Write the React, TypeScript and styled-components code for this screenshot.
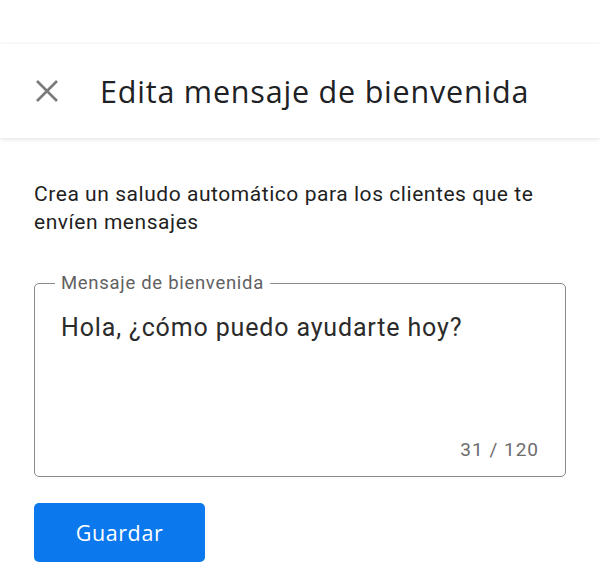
import React, { useState } from "react";
import styled, { createGlobalStyle } from "styled-components";

const Global = createGlobalStyle`
  html, body {
    margin: 0;
    padding: 0;
    background: #fff;
    font-family: Roboto, "Liberation Sans", sans-serif;
  }
`;

const Page = styled.div`
  width: 600px;
  height: 574px;
  background: #fff;
  padding-top: 44px;
  box-sizing: border-box;
  overflow: hidden;
`;

const Header = styled.header`
  height: 94px;
  display: flex;
  align-items: center;
  padding-left: 33px;
  background: #fff;
  box-shadow: 0 -1px 3px rgba(0, 0, 0, 0.04), 0 2px 4px rgba(0, 0, 0, 0.09);
`;

const CloseButton = styled.button`
  width: 28px;
  height: 28px;
  padding: 0;
  border: none;
  background: none;
  display: flex;
  align-items: center;
  justify-content: center;
  color: #7a7a7a;
  margin-right: 39px;
`;

const Title = styled.h1`
  margin: 0;
  font-family: "Open Sans", Roboto, sans-serif;
  font-weight: 400;
  font-size: 30.5px;
  letter-spacing: 0.8px;
  color: #202124;
`;

const Body = styled.main`
  padding: 42px 34px 0 34px;
`;

const Intro = styled.p`
  margin: 0;
  font-size: 21px;
  line-height: 28px;
  letter-spacing: 0.55px;
  color: #1f1f1f;
  max-width: 520px;
`;

const Field = styled.fieldset`
  margin: 37px 0 0 0;
  padding: 0 26px 15px 26px;
  height: 204px;
  box-sizing: border-box;
  border: 1.5px solid #8a8a8a;
  border-radius: 5px;
  display: flex;
  flex-direction: column;
`;

const Legend = styled.legend`
  padding: 0 6px;
  margin-left: -6px;
  font-size: 18.5px;
  letter-spacing: 0.7px;
  color: #616161;
  line-height: 20px;
`;

const Message = styled.textarea`
  flex: 1;
  border: none;
  outline: none;
  resize: none;
  padding: 0;
  margin-top: 20px;
  font-family: Roboto, sans-serif;
  font-size: 25px;
  letter-spacing: 0.85px;
  color: #2b2b2b;
  background: transparent;
`;

const Counter = styled.div`
  align-self: flex-end;
  font-size: 19px;
  letter-spacing: 1px;
  color: #6d6d6d;
`;

const SaveButton = styled.button`
  margin-top: 26px;
  width: 171px;
  height: 59px;
  border: none;
  border-radius: 5px;
  background: #0b78ee;
  color: #fff;
  font-family: "Open Sans", Roboto, sans-serif;
  font-size: 21.5px;
  font-weight: 500;
  letter-spacing: 0.6px;
`;

const CloseIcon = () => (
  <svg width="24" height="24" viewBox="0 0 24 24">
    <path d="M2 2 L22 22 M22 2 L2 22" stroke="currentColor" strokeWidth="2.6" fill="none" />
  </svg>
);

const App = () => {
  const [text, setText] = useState("Hola, ¿cómo puedo ayudarte hoy?");

  return (
    <Page>
      <Global />
      <Header>
        <CloseButton aria-label="Cerrar">
          <CloseIcon />
        </CloseButton>
        <Title>Edita mensaje de bienvenida</Title>
      </Header>
      <Body>
        <Intro>Crea un saludo automático para los clientes que te envíen mensajes</Intro>
        <Field>
          <Legend>Mensaje de bienvenida</Legend>
          <Message value={text} maxLength={120} onChange={(e) => setText(e.target.value)} />
          <Counter>{text.length} / 120</Counter>
        </Field>
        <SaveButton>Guardar</SaveButton>
      </Body>
    </Page>
  );
};

export default App;
